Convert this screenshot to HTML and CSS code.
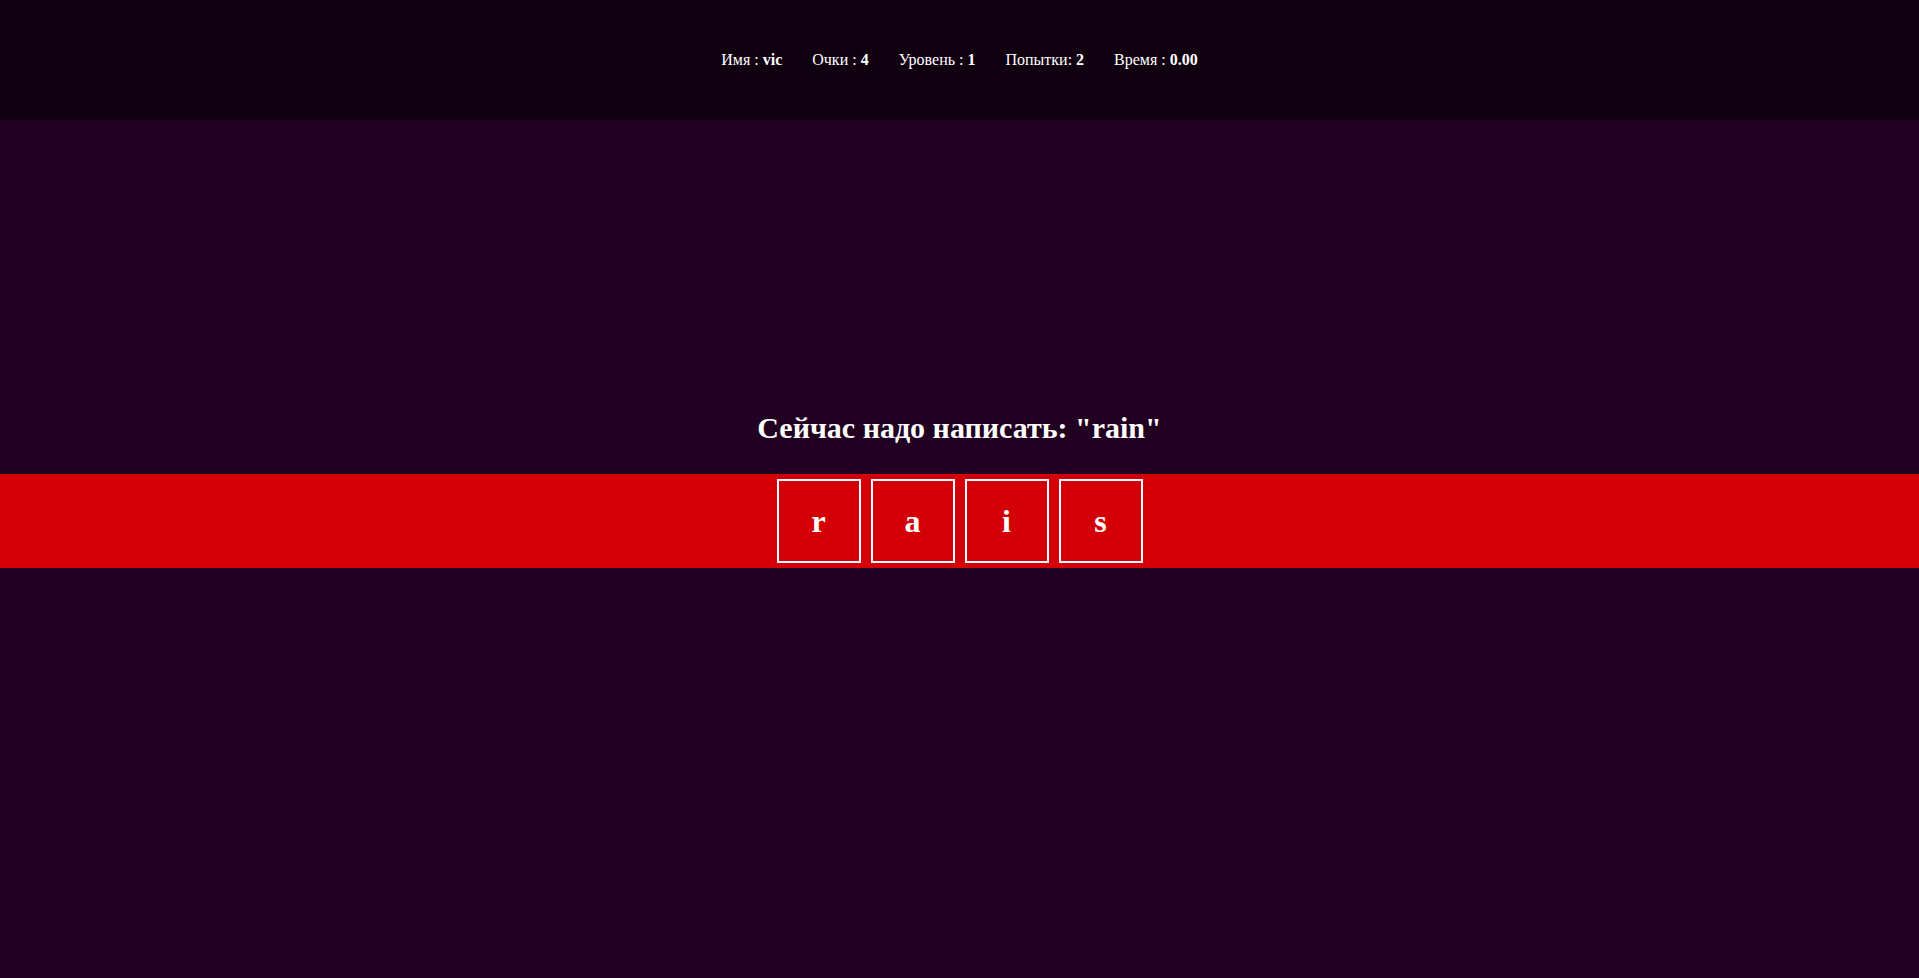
FILE: index.html
```html
<!DOCTYPE html>
<html lang="ru">
<head>
<meta charset="utf-8">
<title>Игра</title>
<link rel="stylesheet" href="styles.css">
</head>
<body>
<header class="top">
  <div class="stats">
    <span class="stat">Имя : <b>vic</b></span>
    <span class="stat">Очки : <b>4</b></span>
    <span class="stat">Уровень : <b>1</b></span>
    <span class="stat">Попытки: <b>2</b></span>
    <span class="stat">Время : <b>0.00</b></span>
  </div>
</header>
<main class="game">
  <h1 class="task">Сейчас надо написать: "rain"</h1>
  <div class="band">
    <div class="cell">r</div>
    <div class="cell">a</div>
    <div class="cell">i</div>
    <div class="cell">s</div>
  </div>
</main>
</body>
</html>
```

FILE: styles.css
```css
html, body {
  margin: 0;
  padding: 0;
  height: 100%;
}
body {
  background: #210021;
  color: #ffffff;
  font-family: "Liberation Serif", "Times New Roman", serif;
  display: flex;
  flex-direction: column;
}
.top {
  height: 120px;
  background: #100010;
  display: flex;
  align-items: center;
  justify-content: center;
  flex-shrink: 0;
}
.stats {
  display: flex;
  font-size: 16px;
}
.stat {
  margin: 0 15px;
}
.game {
  flex: 1;
  display: flex;
  flex-direction: column;
  align-items: stretch;
  padding-top: 289px;
}
.task {
  margin: 0 0 28px;
  text-align: center;
  font-size: 30px;
  font-weight: bold;
  line-height: 37px;
}
.band {
  background: #d30007;
  display: flex;
  justify-content: center;
  padding: 5px 0;
}
.cell {
  width: 80px;
  height: 80px;
  border: 2px solid #ffffff;
  margin: 0 5px;
  display: flex;
  align-items: center;
  justify-content: center;
  font-size: 32px;
  font-weight: bold;
}
```
